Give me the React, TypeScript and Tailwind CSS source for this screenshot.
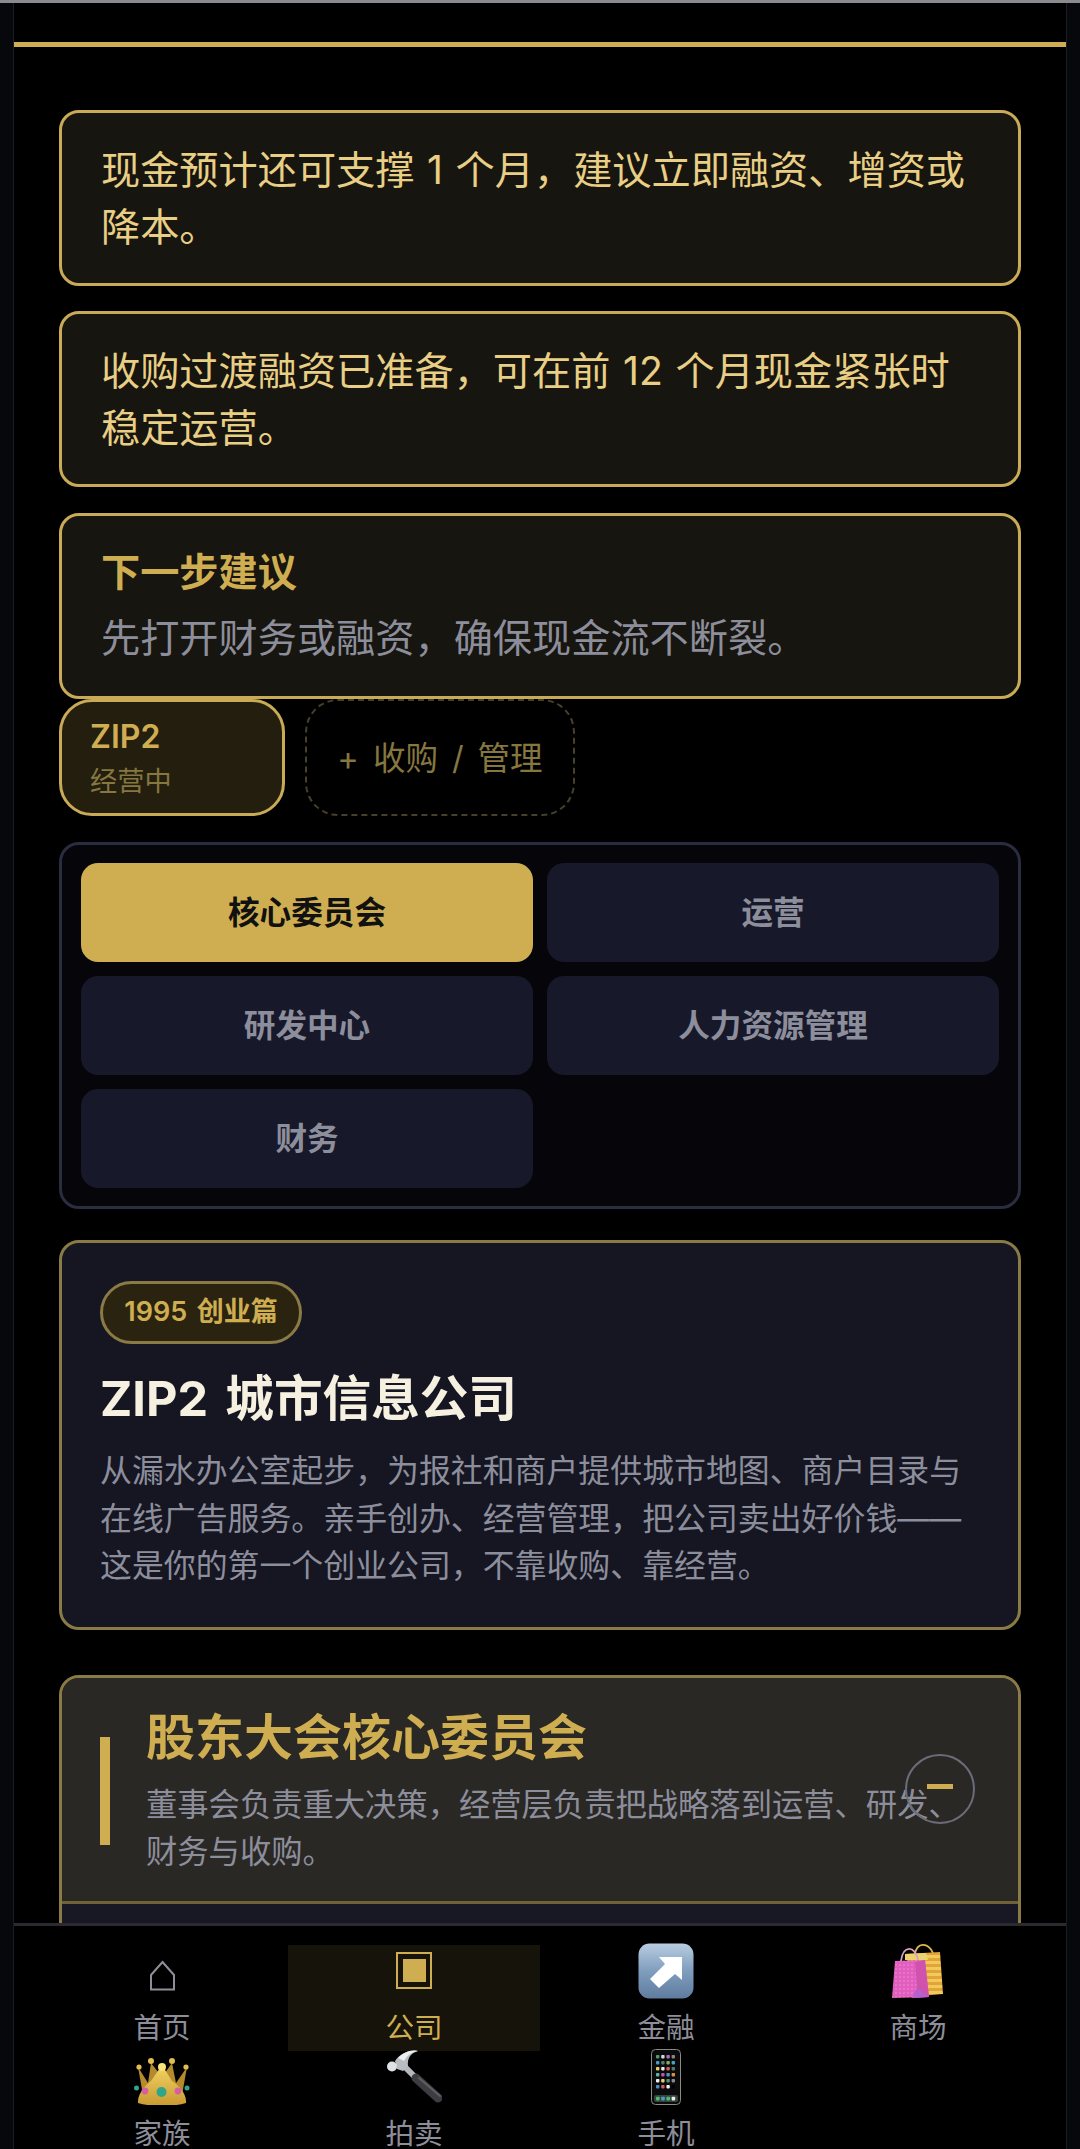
import type { ReactNode } from "react";

const ArrowEmoji = () => (
  <svg width="56" height="56" viewBox="0 0 56 56">
    <defs>
      <linearGradient id="arrowBg" x1="0" y1="0" x2="0" y2="1">
        <stop offset="0" stopColor="#b9cde2" />
        <stop offset="0.5" stopColor="#7f9dbd" />
        <stop offset="1" stopColor="#5f7c9f" />
      </linearGradient>
    </defs>
    <rect x="0.5" y="0.5" width="55" height="55" rx="11" fill="url(#arrowBg)" />
    <path d="M21 14 L44 14 L44 37 L37 31 L21 45 L12 36 L27 21 Z" fill="#fff" />
  </svg>
);

const BagsEmoji = () => (
  <svg width="56" height="56" viewBox="0 0 56 56">
    <defs>
      <pattern id="bagDots" width="4" height="4" patternUnits="userSpaceOnUse">
        <rect width="4" height="4" fill="#e25fc0" />
        <circle cx="2" cy="2" r="0.8" fill="#f08fd6" />
      </pattern>
      <pattern id="bagStripes" width="6" height="6" patternUnits="userSpaceOnUse">
        <rect width="6" height="6" fill="#e0a437" />
        <rect width="6" height="3" fill="#f2c95c" />
      </pattern>
    </defs>
    <path d="M25 11 C27 -1 38 -1 43 10" fill="none" stroke="#e2b64a" strokeWidth="1.8" />
    <path d="M15 11 L50 9 L53 51 L30 53 Z" fill="url(#bagStripes)" />
    <path d="M15 11 L36 10 L38 17 L15 17 Z" fill="#edd36e" />
    <path d="M11 18 C13 2 25 2 28 17" fill="none" stroke="#d9a0c0" strokeWidth="1.8" />
    <path d="M5 18 L35 17 L39 54 L2 55 Z" fill="url(#bagDots)" />
    <path d="M25 19 L35 17 L39 54 L22 55 L27 45 Z" fill="#cf53ad" />
    <path d="M27 45 L39 54 L22 55 Z" fill="#b75fce" />
  </svg>
);

const CrownEmoji = () => (
  <svg width="56" height="48" viewBox="0 0 56 48">
    <defs>
      <linearGradient id="crownGold" x1="0" y1="0" x2="0" y2="1">
        <stop offset="0" stopColor="#f4d465" />
        <stop offset="1" stopColor="#c89a32" />
      </linearGradient>
    </defs>
    <path d="M4 10 L9 38 L48 38 L53 10 L42 26 L38 6 L28 20 L17 6 L14 26 Z" fill="#b58a2c" />
    <path d="M4 46 C3 36 14 26 17 24 L28 8 L38 24 C44 28 53 36 52 46 C38 50 18 50 4 46 Z" fill="url(#crownGold)" />
    <circle cx="5" cy="10" r="2.6" fill="#e3bd50" />
    <circle cx="17" cy="4" r="3" fill="#e3bd50" />
    <circle cx="38" cy="4" r="3" fill="#e3bd50" />
    <circle cx="52" cy="10" r="2.6" fill="#e3bd50" />
    <circle cx="28" cy="10" r="4" fill="#f8e27a" />
    <circle cx="27.5" cy="35" r="5" fill="#2fa58a" />
    <circle cx="11" cy="34" r="3.4" fill="#d55fa0" />
    <circle cx="44" cy="34" r="3.4" fill="#d55fa0" />
    <circle cx="2.5" cy="31" r="2.5" fill="#2fa58a" />
    <circle cx="53" cy="31" r="2.5" fill="#2fa58a" />
  </svg>
);

const HammerEmoji = () => (
  <svg width="56" height="56" viewBox="0 0 56 56">
    <path d="M18 17 L32 31" stroke="#b5b8bc" strokeWidth="6" />
    <path d="M30 29 L52 49" stroke="#3d3d41" strokeWidth="9" strokeLinecap="round" />
    <path d="M33 29 L54 47" stroke="#5e5e63" strokeWidth="2" strokeLinecap="round" />
    <path d="M9 12 C14 5 23 0 32 2 C25 4 21 9 22 17 L17 22 L11 20 Z" fill="#b9bdc2" />
    <path d="M12 9 C17 4 25 0 32 2 C26 3 21 6 18 12 Z" fill="#eceef0" />
    <circle cx="6" cy="17.5" r="5" fill="#dfe2e5" />
  </svg>
);

const PhoneEmoji = () => {
  const dots = [
    "#4f9e6d", "#d8d8d8", "#b46bc0", "#8a8a78",
    "#4b9ac4", "#4f7d6d", "#7fae60", "#47a6c6",
    "#e4cf6e", "#e8e8e8", "#d05c5c", "#4f7d6d",
    "#55b8a0", "#c84fb0", "#4b9ac4", "#df8f3f",
    "#eeeeee", "#e4cf6e", "#5f8a7a", "#8a8a8a",
    "#4b8fd0", "#d05c5c", "#eeeeee", "#000000",
  ];
  return (
    <svg width="30" height="56" viewBox="0 0 30 56">
      <rect x="0.5" y="0.5" width="29" height="55" rx="4" fill="#0b0b0d" stroke="#8c8a7c" />
      {dots.map((c, i) => (
        <rect key={i} x={5 + (i % 4) * 5.2} y={6 + Math.floor(i / 4) * 6} width="3.4" height="3.4" rx="0.8" fill={c} />
      ))}
      <rect x="3" y="46" width="24" height="7" rx="2" fill="#33443c" />
      {["#55b870", "#4b9ac4", "#55b870", "#eeeeee"].map((c, i) => (
        <rect key={c + i} x={5 + i * 5.2} y="47.8" width="3.6" height="3.6" rx="0.8" fill={c} />
      ))}
    </svg>
  );
};

const HomeIcon = () => (
  <svg width="25" height="31" viewBox="0 0 25 31" className="mb-[8px]">
    <path d="M12.5 2 L24 15 V29.5 H1 V15 Z" fill="none" stroke="#8d8e99" strokeWidth="2" />
  </svg>
);

const CompanyIcon = () => (
  <div className="mb-[10px] flex h-[37px] w-[36px] items-center justify-center border-2 border-[#cfae52]">
    <div className="h-[23px] w-[23px] bg-[#cfae52]" />
  </div>
);

const NavItem = ({ icon, label, active }: { icon: ReactNode; label: string; active?: boolean }) => (
  <div className={active ? "flex h-[106px] flex-col items-center bg-[#16130a]" : "flex h-[106px] flex-col items-center"}>
    <div className="-mt-[2px] flex h-[56px] items-end justify-center">{icon}</div>
    <span className={active ? "mt-[10px] text-[28.6px] leading-[38px] text-[#cfae52]" : "mt-[10px] text-[28.6px] leading-[38px] text-[#8d8e99]"}>
      {label}
    </span>
  </div>
);

const Notice = ({ text }: { text: string }) => (
  <div className="rounded-[20px] border-[3px] border-[#c9ab57] bg-[#17150f] py-[28px] pl-[39px] pr-[30px] text-[39.2px] leading-[57px] text-[#e8cf85] [word-spacing:0.04em]">
    {text}
  </div>
);

const deptTabs = ["核心委员会", "运营", "研发中心", "人力资源管理", "财务"];

export default function App() {
  return (
    <div lang="zh-CN" className="flex h-[2149px] w-[1080px] flex-col overflow-hidden bg-[#07080c] font-[Inter,'Noto_Sans_CJK_SC',sans-serif]">
      <div className="h-[3px] bg-[#8b8b8f]" />
      <div className="mx-[13px] flex min-h-0 flex-1 flex-col border-x border-[#1c1d24] bg-black">
        <main className="min-h-0 flex-1 overflow-hidden pt-[39px]">
          <div className="h-[5px] bg-[#cfae52]" />
          <div className="mx-[45px] pt-[63px]">
            <div className="flex flex-col gap-[25px]">
              <Notice text="现金预计还可支撑 1 个月，建议立即融资、增资或降本。" />
              <Notice text="收购过渡融资已准备，可在前 12 个月现金紧张时稳定运营。" />
              <div className="mt-[1px] rounded-[20px] border-[3px] border-[#c9ab57] bg-[#17150f] pb-[27px] pl-[39px] pr-[30px] pt-[25px]">
                <div className="text-[39.2px] font-bold leading-[62px] text-[#cfae52]">下一步建议</div>
                <div className="mt-[4px] text-[39.2px] leading-[62px] text-[#8d8e9c]">先打开财务或融资，确保现金流不断裂。</div>
              </div>
            </div>

            <div className="flex gap-[20px]">
              <div className="h-[117px] w-[226px] rounded-[33px] border-[3px] border-[#c9ab57] bg-[#241e0f] pl-[28px] pt-[13px]">
                <div className="text-[32px] font-semibold leading-[44px] text-[#cfae52]">ZIP2</div>
                <div className="mt-[2px] text-[27.2px] leading-[42px] text-[#85773f]">经营中</div>
              </div>
              <div className="flex h-[117px] w-[270px] items-center justify-center rounded-[33px] border-2 border-dashed border-[#46412b] pt-[3px] text-[32.5px] text-[#85773f] [word-spacing:0.15em]">
                + 收购 / 管理
              </div>
            </div>

            <div className="mt-[26px] grid grid-cols-2 gap-[14px] rounded-[20px] border-[3px] border-[#2a2c40] bg-[#05050a] px-[19px] py-[18px]">
              {deptTabs.map((tab, i) => (
                <div
                  key={tab}
                  className={
                    i === 0
                      ? "flex h-[99px] items-center justify-center rounded-[17px] bg-[#cfae52] text-[31.6px] font-bold text-[#111111]"
                      : "flex h-[99px] items-center justify-center rounded-[17px] bg-[#171829] text-[31.6px] font-bold text-[#8d8e9c]"
                  }
                >
                  {tab}
                </div>
              ))}
            </div>

            <div className="mt-[31px] rounded-[20px] border-[3px] border-[#8a7a45] bg-[#151622] px-[38px] pb-[37px] pt-[38px]">
              <div className="flex h-[63px] w-[202px] items-center justify-center rounded-full border-[3px] border-[#8a7a45] bg-[#2a2310] text-[27px] font-semibold text-[#cfae52] [word-spacing:0.1em]">
                1995 创业篇
              </div>
              <h2 className="mt-[24px] text-[48.6px] font-bold leading-[62px] text-[#f5f0e0] [word-spacing:0.12em]">ZIP2 城市信息公司</h2>
              <p className="mt-[17px] text-[31.9px] leading-[47.5px] text-[#8d8e9c]">
                从漏水办公室起步，为报社和商户提供城市地图、商户目录与在线广告服务。亲手创办、经营管理，把公司卖出好价钱——这是你的第一个创业公司，不靠收购、靠经营。
              </p>
            </div>

            <section className="relative mt-[45px] h-[400px] rounded-t-[20px] border-[3px] border-[#8a7a45] bg-[#171824]">
              <div className="flex items-center gap-[36px] rounded-t-[17px] border-b-[3px] border-[#6f6238] bg-[#2a2824] pb-[25px] pl-[38px] pr-[40px] pt-[29px]">
                <div className="h-[108px] w-[10px] shrink-0 bg-[#cfae52]" />
                <div>
                  <h3 className="text-[49px] font-bold leading-[62px] text-[#cfae52]">股东大会核心委员会</h3>
                  <p className="mt-[13px] text-[31.3px] leading-[47px] text-[#8d8e9c]">
                    董事会负责重大决策，经营层负责把战略落到运营、研发、财务与收购。
                  </p>
                </div>
              </div>
              <div className="absolute right-[43px] top-[76px] flex h-[70px] w-[70px] items-center justify-center rounded-full border-2 border-[#6b6c7a]">
                <div className="-mt-[5px] h-[5px] w-[26px] bg-[#cfae52]" />
              </div>
            </section>
          </div>
        </main>

        <nav className="grid h-[226px] grid-cols-4 content-start border-t-[3px] border-[#2a2a30] bg-black px-[22px] pt-[19px]">
          <NavItem icon={<HomeIcon />} label="首页" />
          <NavItem icon={<CompanyIcon />} label="公司" active />
          <NavItem icon={<ArrowEmoji />} label="金融" />
          <NavItem icon={<BagsEmoji />} label="商场" />
          <NavItem icon={<CrownEmoji />} label="家族" />
          <NavItem icon={<HammerEmoji />} label="拍卖" />
          <NavItem icon={<PhoneEmoji />} label="手机" />
        </nav>
      </div>
    </div>
  );
}
